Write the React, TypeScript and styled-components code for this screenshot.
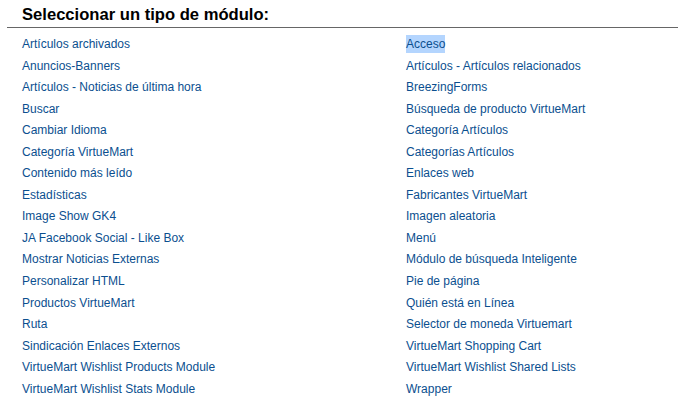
import React from "react";
import styled, { createGlobalStyle } from "styled-components";

const GlobalStyle = createGlobalStyle`
  body {
    margin: 0;
    background: #ffffff;
    font-family: "Liberation Sans", Arial, sans-serif;
  }
`;

const Panel = styled.div`
  width: 678px;
  padding-left: 7px;
  box-sizing: border-box;
`;

const Heading = styled.h2`
  margin: 0;
  padding: 5px 0 2px 15px;
  font-size: 16.6px;
  line-height: 20px;
  font-weight: bold;
  color: #000;
  border-bottom: 1px solid #666;
`;

const ModuleGrid = styled.ul`
  list-style: none;
  margin: 0;
  padding: 6px 0 0 15px;
  display: grid;
  grid-template-columns: 384px 1fr;
  grid-auto-flow: column;
  grid-template-rows: repeat(17, 21.55px);
`;

const ModuleItem = styled.li`
  font-size: 12px;
  line-height: 21.55px;
  white-space: nowrap;
`;

const ModuleLink = styled.a<{ $selected?: boolean }>`
  color: #0b4f8f;
  text-decoration: none;
  padding: 2px 0;
  background: ${(p) => (p.$selected ? "#b4d5fe" : "transparent")};
`;

const left = [
  "Artículos archivados",
  "Anuncios-Banners",
  "Artículos - Noticias de última hora",
  "Buscar",
  "Cambiar Idioma",
  "Categoría VirtueMart",
  "Contenido más leído",
  "Estadísticas",
  "Image Show GK4",
  "JA Facebook Social - Like Box",
  "Mostrar Noticias Externas",
  "Personalizar HTML",
  "Productos VirtueMart",
  "Ruta",
  "Sindicación Enlaces Externos",
  "VirtueMart Wishlist Products Module",
  "VirtueMart Wishlist Stats Module",
];

const right = [
  "Acceso",
  "Artículos - Artículos relacionados",
  "BreezingForms",
  "Búsqueda de producto VirtueMart",
  "Categoría Artículos",
  "Categorías Artículos",
  "Enlaces web",
  "Fabricantes VirtueMart",
  "Imagen aleatoria",
  "Menú",
  "Módulo de búsqueda Inteligente",
  "Pie de página",
  "Quién está en Línea",
  "Selector de moneda Virtuemart",
  "VirtueMart Shopping Cart",
  "VirtueMart Wishlist Shared Lists",
  "Wrapper",
];

export default function App() {
  return (
    <>
      <GlobalStyle />
      <Panel>
        <Heading>Seleccionar un tipo de módulo:</Heading>
        <ModuleGrid>
          {[...left, ...right].map((name) => (
            <ModuleItem key={name}>
              <ModuleLink href="#" $selected={name === "Acceso"}>
                {name}
              </ModuleLink>
            </ModuleItem>
          ))}
        </ModuleGrid>
      </Panel>
    </>
  );
}
